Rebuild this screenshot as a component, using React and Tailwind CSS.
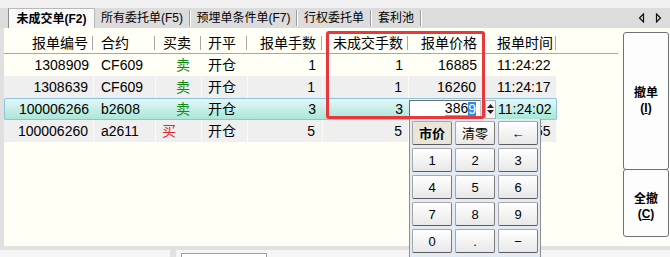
const rows = [
  { id: "1308909", c: "CF609", bs: "卖", oc: "开仓", n: "1", u: "1", p: "16885", t: "11:24:22" },
  { id: "1308639", c: "CF609", bs: "卖", oc: "开仓", n: "1", u: "1", p: "16260", t: "11:24:17" },
  { id: "100006266", c: "b2608", bs: "卖", oc: "开仓", n: "3", u: "3", p: "3869", t: "11:24:02", sel: true },
  { id: "100006260", c: "a2611", bs: "买", oc: "开仓", n: "5", u: "5", p: "3712", t: "11:24:55" },
];

const keys = ["市价", "清零", "←", "1", "2", "3", "4", "5", "6", "7", "8", "9", "0", ".", "−"];

const Divider = ({ className = "" }) => (
  <span className={"w-px h-[14px] bg-[#a9a9a9] " + className} />
);

const TabSep = () => <span className="w-[2px] h-[16px] self-center border-l border-[#9c9c9c] border-r border-r-white" />;

function HeaderRow() {
  return (
    <div className="flex h-[26px] pt-[4px] border-b border-[#a8a8a8] text-[14px] leading-none">
      <div className="w-[90px] flex items-center">
        <span className="ml-auto">报单编号</span>
        <Divider className="ml-[4px] mr-px" />
      </div>
      <div className="w-[62px] flex items-center">
        <span className="pl-[7px]">合约</span>
        <Divider className="ml-auto mr-px" />
      </div>
      <div className="w-[46px] flex items-center">
        <span className="pl-[7px]">买卖</span>
        <Divider className="ml-auto mr-px" />
      </div>
      <div className="w-[46px] flex items-center">
        <span className="pl-[6px]">开平</span>
        <Divider className="ml-auto mr-px" />
      </div>
      <div className="w-[75px] flex items-center">
        <span className="ml-auto">报单手数</span>
        <Divider className="ml-[5px] mr-px" />
      </div>
      <div className="w-[86px] flex items-center">
        <span className="ml-auto">未成交手数</span>
        <Divider className="ml-[4px] mr-px" />
      </div>
      <div className="w-[75px] flex items-center">
        <span className="ml-auto">报单价格</span>
        <Divider className="ml-[5px] mr-px" />
      </div>
      <div className="w-[73px] flex items-center">
        <span className="pl-[13px]">报单时间</span>
        <Divider className="ml-auto mr-px" />
      </div>
    </div>
  );
}

function Row({ r, i }) {
  const gray = i % 2 === 1;
  const sep = gray ? " border-r border-[#fbfbf6]" : "";
  const base = "flex h-[22px] w-[553px] text-[14px] leading-none";
  const rowCls = r.sel
    ? base + " rounded-[2px] bg-gradient-to-b from-[#e6f7fb] to-[#a6e6d4] shadow-[inset_0_0_0_1px_#8cc3dd]"
    : gray
    ? base + " bg-[#efefef]"
    : base;
  return (
    <div className={rowCls}>
      <div className={"w-[90px] flex items-center justify-end pr-[5px]" + sep}>{r.id}</div>
      <div className={"w-[62px] flex items-center pl-[7px]" + sep}>{r.c}</div>
      <div className={"w-[46px] flex items-center" + sep}>
        {r.bs === "卖" ? (
          <span className="pl-[20px] text-[#128a12]">卖</span>
        ) : (
          <span className="pl-[6px] text-[#e02828]">买</span>
        )}
      </div>
      <div className={"w-[46px] flex items-center pl-[6px]" + sep}>{r.oc}</div>
      <div className={"w-[75px] flex items-center justify-end pr-[7px]" + sep}>{r.n}</div>
      <div className={"w-[86px] flex items-center justify-end pr-[6px]" + sep}>{r.u}</div>
      {r.sel ? (
        <div className="w-[75px] flex items-center">
          <div className="w-[72px] h-[19px] bg-white border border-[#c8c8c8] border-t-[#6f6f6f] border-l-[#6f6f6f] flex items-center justify-end pr-[4px]">
            <span className="border-b-2 border-[#a0a0a0] leading-[14px]">386</span>
            <span className="bg-[#2a8cf0] text-white leading-[15px]">9</span>
          </div>
        </div>
      ) : (
        <div className={"w-[75px] flex items-center justify-end pr-[7px]" + sep}>{r.p}</div>
      )}
      <div className={"w-[73px] flex items-center" + (r.sel ? "" : " pl-[13px]") + sep}>
        {r.sel && (
          <div className="ml-px mr-[2px] w-[11px] h-[19px] flex flex-col items-center justify-center gap-[2px] bg-[#f4f4f4] border border-[#b0b0b0]">
            <svg width="7" height="4" viewBox="0 0 7 4"><path d="M3.5 0 L7 4 L0 4 Z" fill="#222" /></svg>
            <svg width="7" height="4" viewBox="0 0 7 4"><path d="M0 0 L7 0 L3.5 4 Z" fill="#222" /></svg>
          </div>
        )}
        {r.t}
      </div>
    </div>
  );
}

export default function App() {
  return (
    <div className="w-[670px] h-[257px] relative overflow-hidden bg-[#f1f1f1] text-black font-['Liberation_Sans','Noto_Sans_CJK_SC',sans-serif]">
      <div className="h-[8px] bg-[#f1f1f1]" />
      <div className="h-[20px] bg-[#dcdcdc] flex items-stretch text-[12px] leading-none">
        <div className="w-[8px]" />
        <div className="w-[87px] bg-[#f9f9f9] border-t border-r border-l border-[#b8b8b8] border-l-[#8c8c8c] flex items-center justify-center font-bold">
          未成交单(F2)
        </div>
        <div className="w-[94px] flex items-center justify-center">所有委托单(F5)</div>
        <TabSep />
        <div className="w-[105px] flex items-center justify-center">预埋单条件单(F7)</div>
        <TabSep />
        <div className="w-[72px] flex items-center justify-center">行权委托单</div>
        <TabSep />
        <div className="w-[48px] flex items-center justify-center">套利池</div>
        <TabSep />
        <div className="ml-auto flex items-center gap-[10px] pr-[8px]">
          <svg width="7" height="10" viewBox="0 0 7 10">
            <path d="M5.5 1 L1.5 5 L5.5 9 Z" fill="none" stroke="#111" strokeWidth="1.2" />
          </svg>
          <svg width="7" height="10" viewBox="0 0 7 10">
            <path d="M1.5 1 L5.5 5 L1.5 9 Z" fill="none" stroke="#111" strokeWidth="1.2" />
          </svg>
        </div>
      </div>

      <div className="flex h-[218px]">
        <div className="w-[4px] bg-[#e0e0e0]" />
        <div className="flex-1 flex bg-[#fffff6]">
          <div className="w-[614px]">
            <HeaderRow />
            {rows.map((r, i) => (
              <Row key={r.id} r={r} i={i} />
            ))}
          </div>
          <div className="pt-[4px] pl-[5px]">
            <div className="w-[46px] h-[138px] border border-[#707070] rounded-[3px] bg-[#fdfdfd] flex flex-col items-center justify-center gap-[2px] text-[12px] font-bold leading-[13px]">
              <span>撤单</span>
              <span>(<u>I</u>)</span>
            </div>
            <div className="w-[46px] h-[68px] -mt-px border border-[#707070] rounded-[3px] bg-[#fdfdfd] flex flex-col items-center justify-center gap-[2px] text-[12px] font-bold leading-[13px] pt-[8px]">
              <span>全撤</span>
              <span>(<u>C</u>)</span>
            </div>
          </div>
        </div>
      </div>

      <div className="h-[11px] bg-[#e1e1e1] pt-[4px] flex">
        <div className="w-[170px] bg-[#f5f5f5]" />
        <div className="ml-[6px] flex-1 bg-[#f5f5f5] pt-[3px] pl-[5px]">
          <div className="w-[86px] h-full border border-b-0 border-[#a0a0a0] bg-white" />
        </div>
      </div>

      <div className="absolute left-[326px] top-[31px] w-[159px] h-[88px] border-[3px] border-[#e8383d] rounded-[3px]" />

      <div className="absolute left-[409px] top-[119px] w-[132px] h-[140px] bg-[#e2eaf4] border-l border-r border-[#8e8e8e] px-[2px] pt-[2px] grid grid-cols-3 gap-x-[3px] gap-y-[3px] content-start text-[13px] leading-none">
        {keys.map((k) => (
          <div
            key={k}
            className={
              "h-[24px] flex items-center justify-center rounded-[2px] border border-[#a8a8a8] border-b-[#5c5c5c] border-r-[#7a7a7a] " +
              (k === "市价"
                ? "bg-[#e9e5d8] font-bold"
                : "bg-gradient-to-b from-white to-[#e8e8e8]")
            }
          >
            {k}
          </div>
        ))}
      </div>
    </div>
  );
}
